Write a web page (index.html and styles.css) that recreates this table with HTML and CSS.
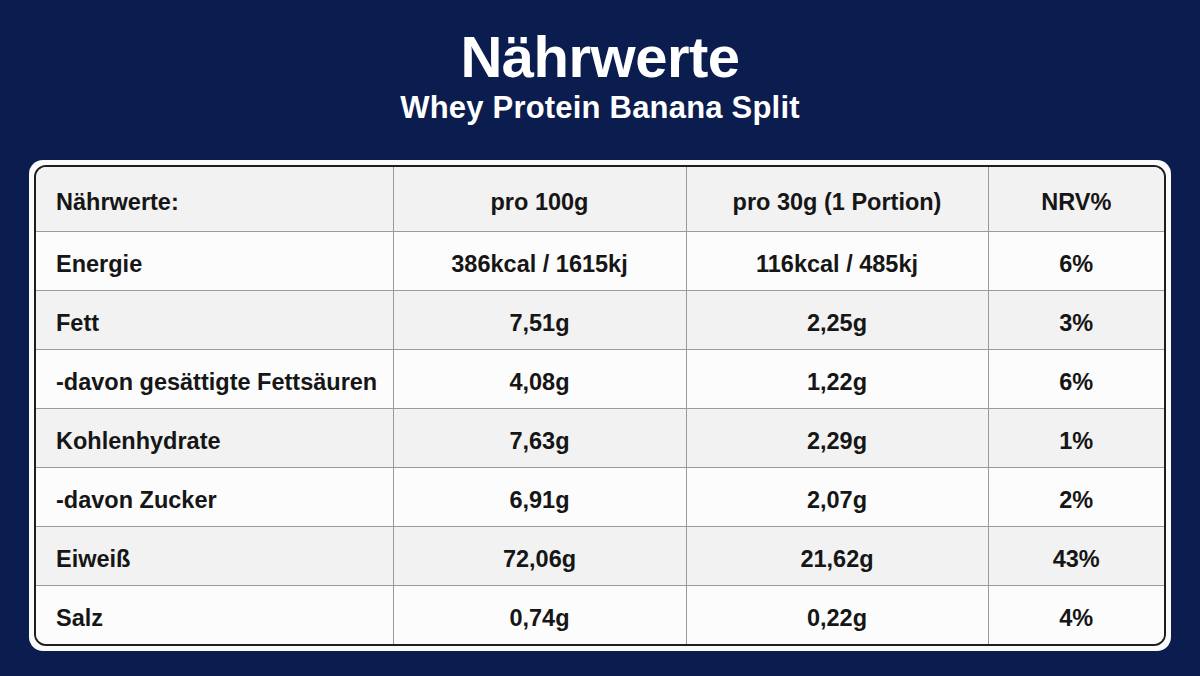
FILE: index.html
```html
<!DOCTYPE html>
<html lang="de">
<head>
<meta charset="utf-8">
<link rel="stylesheet" href="styles.css">
</head>
<body>
<div class="page">
  <header class="head">
    <h1 class="title">Nährwerte</h1>
    <p class="subtitle">Whey Protein Banana Split</p>
  </header>
  <div class="card">
    <div class="frame">
      <table class="nt">
        <colgroup>
          <col class="c1"><col class="c2"><col class="c3"><col class="c4">
        </colgroup>
        <thead>
          <tr><th class="lbl">Nährwerte:</th><th>pro 100g</th><th>pro 30g (1 Portion)</th><th>NRV%</th></tr>
        </thead>
        <tbody>
          <tr><td class="lbl">Energie</td><td>386kcal / 1615kj</td><td>116kcal / 485kj</td><td>6%</td></tr>
          <tr><td class="lbl">Fett</td><td>7,51g</td><td>2,25g</td><td>3%</td></tr>
          <tr><td class="lbl">-davon gesättigte Fettsäuren</td><td>4,08g</td><td>1,22g</td><td>6%</td></tr>
          <tr><td class="lbl">Kohlenhydrate</td><td>7,63g</td><td>2,29g</td><td>1%</td></tr>
          <tr><td class="lbl">-davon Zucker</td><td>6,91g</td><td>2,07g</td><td>2%</td></tr>
          <tr><td class="lbl">Eiweiß</td><td>72,06g</td><td>21,62g</td><td>43%</td></tr>
          <tr><td class="lbl">Salz</td><td>0,74g</td><td>0,22g</td><td>4%</td></tr>
        </tbody>
      </table>
    </div>
  </div>
</div>
</body>
</html>
```

FILE: styles.css
```css
html, body {
  margin: 0;
  padding: 0;
}
body {
  width: 1200px;
  height: 676px;
  background: #0b1c4f;
  overflow: hidden;
  font-family: "Liberation Sans", Arial, sans-serif;
}
.page {
  display: flex;
  flex-direction: column;
  align-items: center;
}
.head {
  display: flex;
  flex-direction: column;
  align-items: center;
  color: #fff;
  padding-top: 24px;
}
.title {
  margin: 0;
  font-family: "Liberation Sans", Arial, sans-serif;
  font-weight: 700;
  font-size: 58px;
  line-height: 66px;
  letter-spacing: -0.5px;
}
.subtitle {
  margin: 0;
  font-family: "Liberation Sans", Arial, sans-serif;
  font-weight: 700;
  font-size: 31px;
  line-height: 36px;
  letter-spacing: 0.2px;
}
.card {
  margin-top: 34px;
  width: 1132px;
  padding: 5px;
  background: #fbfbfb;
  border-radius: 14px;
}
.frame {
  border: 2px solid #1e1e1e;
  border-radius: 12px;
  overflow: hidden;
  background: #fff;
}
.nt {
  width: 100%;
  border-collapse: collapse;
  table-layout: fixed;
  font-family: "Liberation Sans", Arial, sans-serif;
  font-weight: 700;
  font-size: 23.5px;
  color: #161616;
}
.c1 { width: 357px; }
.c2 { width: 293px; }
.c3 { width: 302px; }
.c4 { width: auto; }
.nt th, .nt td {
  height: 59px;
  padding: 7px 0 0 0;
  box-sizing: border-box;
  text-align: center;
  vertical-align: middle;
  border-left: 1px solid #9a9a9a;
  border-top: 1px solid #9a9a9a;
}
.nt thead th {
  height: 64px;
  border-top: none;
  font-weight: 700;
}
.nt th:first-child, .nt td:first-child {
  border-left: none;
}
.nt .lbl {
  text-align: left;
  padding-left: 20px;
}
.nt thead tr { background: #f2f2f2; }
.nt tbody tr:nth-child(even) { background: #f2f2f2; }
.nt tbody tr:nth-child(odd) { background: #fcfcfc; }
```
